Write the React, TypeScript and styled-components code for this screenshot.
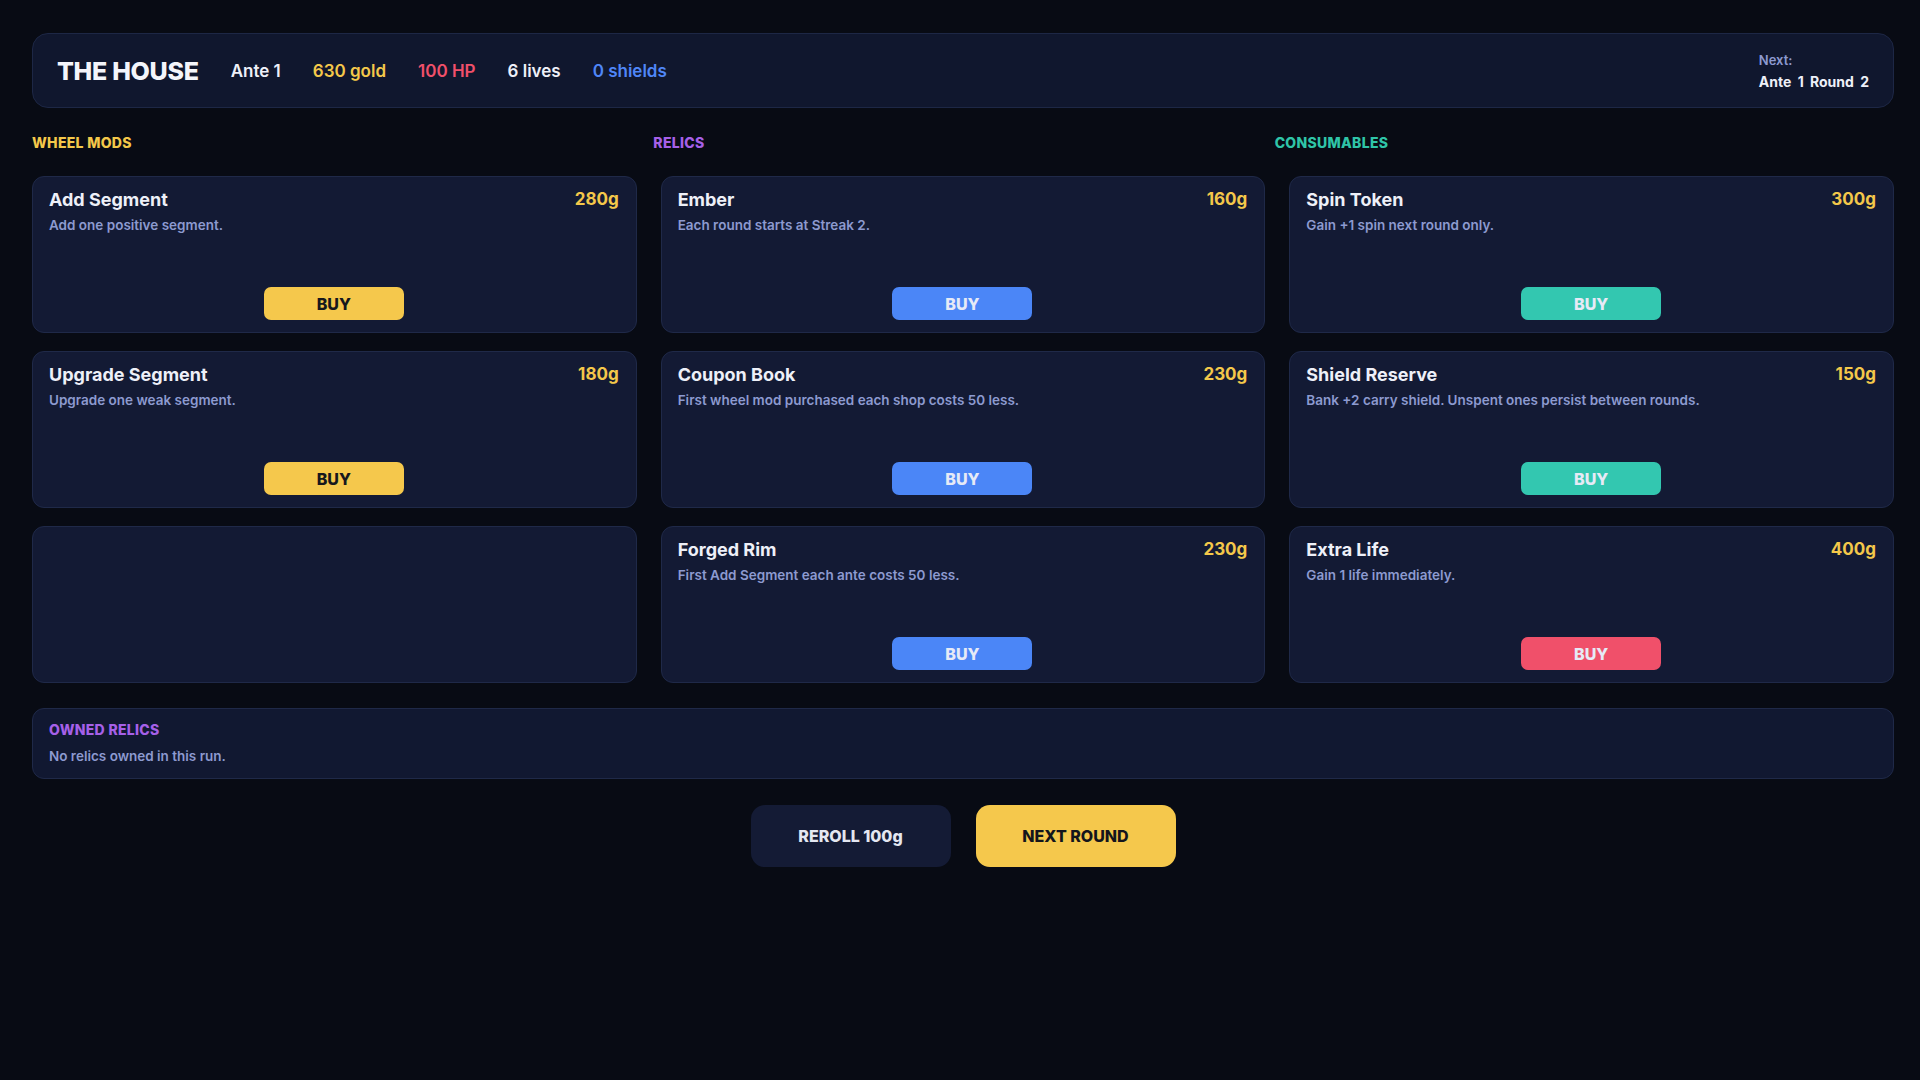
import React from "react";
import styled, { createGlobalStyle } from "styled-components";

const Global = createGlobalStyle`
  html, body { margin: 0; padding: 0; background: #080b14; }
  body { font-family: "Inter", "Lato", "Liberation Sans", sans-serif; color: #eef0f8; }
  * { box-sizing: border-box; }
`;

const Page = styled.div`
  min-height: 1080px;
  padding: 33px 26px 32px 32px;
  display: flex;
  flex-direction: column;
`;

const Header = styled.header`
  height: 75px;
  background: #10172e;
  border: 1px solid #1d2745;
  border-radius: 16px;
  display: flex;
  align-items: center;
  padding: 0 24px;
  gap: 32px;
`;

const Brand = styled.h1`
  margin: 0;
  font-size: 25px;
  font-weight: 800;
  letter-spacing: -0.3px;
  color: #f4f5fb;
`;

const Stat = styled.span<{ $color: string }>`
  font-size: 17px;
  font-weight: 600;
  color: ${(p) => p.$color};
`;

const NextBox = styled.div`
  margin-left: auto;
  display: flex;
  flex-direction: column;
  gap: 5px;
`;

const NextLabel = styled.span`
  font-size: 13px;
  font-weight: 600;
  color: #8d9ad0;
`;

const NextValue = styled.span`
  font-size: 14px;
  font-weight: 700;
  color: #eef0f8;
  word-spacing: 3px;
`;

const LabelRow = styled.div`
  display: grid;
  grid-template-columns: repeat(3, 1fr);
  gap: 2px;
  margin-top: 27px;
`;

const SectionLabel = styled.h2<{ $color: string }>`
  margin: 0;
  font-size: 14px;
  line-height: 16px;
  font-weight: 800;
  letter-spacing: 0.3px;
  text-transform: uppercase;
  color: ${(p) => p.$color};
`;

const Grid = styled.div`
  display: grid;
  grid-template-columns: repeat(3, 1fr);
  grid-auto-rows: 157px;
  column-gap: 24px;
  row-gap: 18px;
  margin-top: 25px;
`;

const Card = styled.div`
  background: #131a34;
  border: 1px solid #1f2948;
  border-radius: 12px;
  padding: 11px 17px 12px 16px;
  display: flex;
  flex-direction: column;
`;

const CardTop = styled.div`
  display: flex;
  justify-content: space-between;
  align-items: center;
  height: 22px;
`;

const CardTitle = styled.span`
  font-size: 18px;
  font-weight: 700;
  color: #eef0f8;
`;

const Price = styled.span`
  font-size: 17px;
  font-weight: 700;
  color: #f4c84a;
`;

const Desc = styled.p`
  margin: 7px 0 0;
  font-size: 13.5px;
  line-height: 16px;
  font-weight: 600;
  color: #8d9ad0;
`;

const BuyButton = styled.button<{ $bg: string; $fg: string }>`
  margin: auto auto 0;
  width: 140px;
  height: 33px;
  border: none;
  border-radius: 7px;
  background: ${(p) => p.$bg};
  color: ${(p) => p.$fg};
  font-family: inherit;
  font-size: 16px;
  font-weight: 800;
  cursor: pointer;
`;

const Owned = styled.section`
  margin-top: 25px;
  height: 71px;
  background: #111831;
  border: 1px solid #1f2948;
  border-radius: 12px;
  padding: 13px 16px;
  display: flex;
  flex-direction: column;
  gap: 10px;
`;

const OwnedTitle = styled.h3`
  margin: 0;
  font-size: 14px;
  line-height: 16px;
  font-weight: 800;
  letter-spacing: 0.3px;
  text-transform: uppercase;
  color: #a660e8;
`;

const OwnedText = styled.p`
  margin: 0;
  font-size: 13.5px;
  line-height: 16px;
  font-weight: 600;
  color: #8d9ad0;
`;

const Actions = styled.div`
  margin-top: 26px;
  display: flex;
  justify-content: center;
  gap: 25px;
`;

const ActionButton = styled.button<{ $primary?: boolean }>`
  width: 200px;
  height: 62px;
  border: none;
  border-radius: 14px;
  background: ${(p) => (p.$primary ? "#f5c84c" : "#141b35")};
  color: ${(p) => (p.$primary ? "#14151c" : "#e4e7f1")};
  font-family: inherit;
  font-size: 16px;
  font-weight: 800;
  cursor: pointer;
`;

type Item = { title: string; price: string; desc: string; bg: string; fg: string } | null;

const YEL = { bg: "#f5c84c", fg: "#16171d" };
const BLU = { bg: "#4b86f7", fg: "#e6eaf6" };
const TEAL = { bg: "#33c7b0", fg: "#e6eaf6" };
const RED = { bg: "#f0506a", fg: "#e6eaf6" };

const items: Item[] = [
  { title: "Add Segment", price: "280g", desc: "Add one positive segment.", ...YEL },
  { title: "Ember", price: "160g", desc: "Each round starts at Streak 2.", ...BLU },
  { title: "Spin Token", price: "300g", desc: "Gain +1 spin next round only.", ...TEAL },
  { title: "Upgrade Segment", price: "180g", desc: "Upgrade one weak segment.", ...YEL },
  { title: "Coupon Book", price: "230g", desc: "First wheel mod purchased each shop costs 50 less.", ...BLU },
  { title: "Shield Reserve", price: "150g", desc: "Bank +2 carry shield. Unspent ones persist between rounds.", ...TEAL },
  null,
  { title: "Forged Rim", price: "230g", desc: "First Add Segment each ante costs 50 less.", ...BLU },
  { title: "Extra Life", price: "400g", desc: "Gain 1 life immediately.", ...RED },
];

export default function App() {
  return (
    <>
      <Global />
      <Page>
        <Header>
          <Brand>THE HOUSE</Brand>
          <Stat $color="#eef0f8">Ante 1</Stat>
          <Stat $color="#f4c84a">630 gold</Stat>
          <Stat $color="#f0506a">100 HP</Stat>
          <Stat $color="#eef0f8">6 lives</Stat>
          <Stat $color="#4f86f7">0 shields</Stat>
          <NextBox>
            <NextLabel>Next:</NextLabel>
            <NextValue>Ante 1 Round 2</NextValue>
          </NextBox>
        </Header>

        <LabelRow>
          <SectionLabel $color="#f4c84a">Wheel Mods</SectionLabel>
          <SectionLabel $color="#a660e8">Relics</SectionLabel>
          <SectionLabel $color="#2fc5a8">Consumables</SectionLabel>
        </LabelRow>

        <Grid>
          {items.map((it, i) =>
            it ? (
              <Card key={i}>
                <CardTop>
                  <CardTitle>{it.title}</CardTitle>
                  <Price>{it.price}</Price>
                </CardTop>
                <Desc>{it.desc}</Desc>
                <BuyButton $bg={it.bg} $fg={it.fg}>BUY</BuyButton>
              </Card>
            ) : (
              <Card key={i} />
            )
          )}
        </Grid>

        <Owned>
          <OwnedTitle>Owned Relics</OwnedTitle>
          <OwnedText>No relics owned in this run.</OwnedText>
        </Owned>

        <Actions>
          <ActionButton>REROLL 100g</ActionButton>
          <ActionButton $primary>NEXT ROUND</ActionButton>
        </Actions>
      </Page>
    </>
  );
}
